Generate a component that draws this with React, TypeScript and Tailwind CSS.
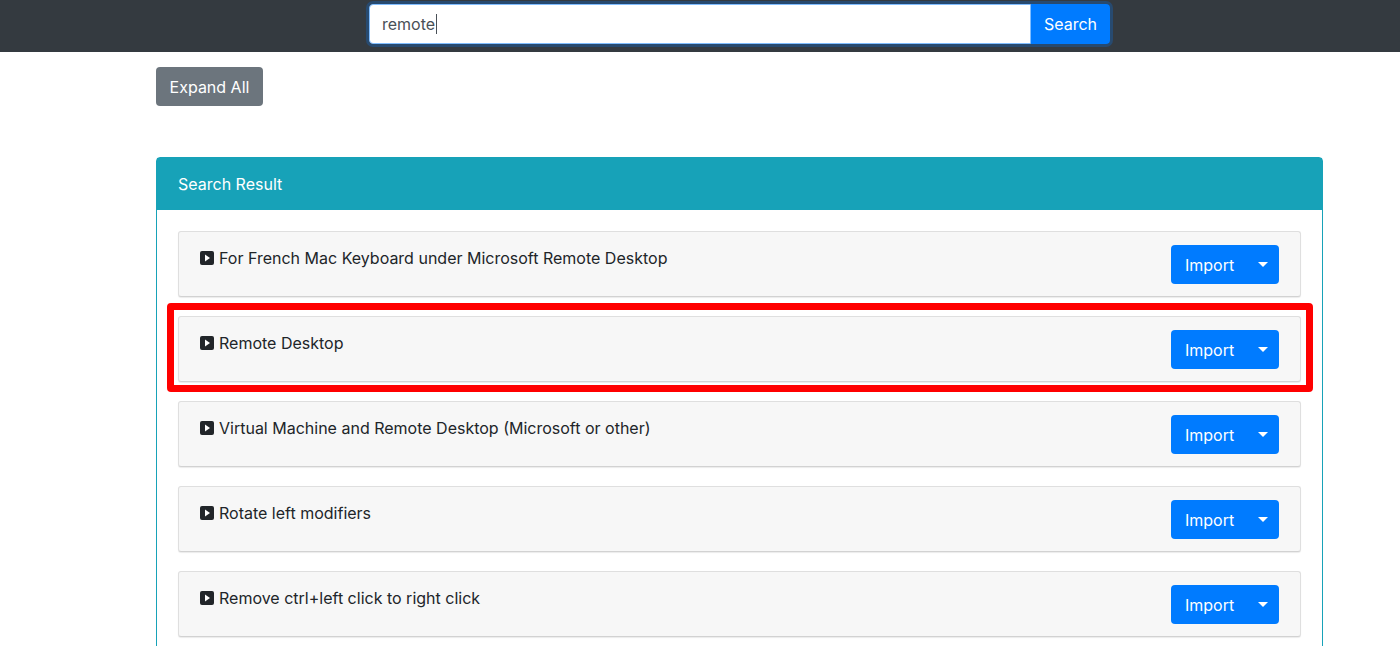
import React from 'react';

const items = [
  'For French Mac Keyboard under Microsoft Remote Desktop',
  'Remote Desktop',
  'Virtual Machine and Remote Desktop (Microsoft or other)',
  'Rotate left modifiers',
  'Remove ctrl+left click to right click',
];

const CaretSquare = () => (
  <svg className="h-[14px] w-[14px] flex-shrink-0" viewBox="0 0 14 14">
    <rect x="0" y="0" width="14" height="14" rx="2" fill="#212529" />
    <path d="M5 3.5 L10 7 L5 10.5 Z" fill="#fff" />
  </svg>
);

const ImportButton = () => (
  <div className="flex h-[39px] w-[108px] flex-shrink-0 rounded-[4px] bg-[#007bff] text-white">
    <button type="button" className="flex-1 pl-[14px] text-left text-[16px] leading-[24px]">
      Import
    </button>
    <button type="button" className="flex items-center pl-[6px] pr-[11px]">
      <span className="h-0 w-0 border-x-[5px] border-t-[5px] border-x-transparent border-t-white" />
    </button>
  </div>
);

const ResultItem: React.FC<{ title: string; highlighted?: boolean }> = ({ title, highlighted }) => (
  <div className="relative">
    {highlighted && (
      <div className="pointer-events-none absolute -left-[11px] -right-[12px] -top-[13px] -bottom-[10px] rounded-[4px] border-[7px] border-[#ff0000]" />
    )}
    <div className="flex h-[66px] items-start justify-between rounded-[3px] border border-[#dfdfdf] border-b-[#d2d2d2] bg-[#f7f7f7] pl-[21px] pr-[21px] pt-[13px] shadow-[0_1px_1px_rgba(0,0,0,0.08)]">
      <div className="flex items-center gap-[5px] pt-[1px] text-[16px] leading-[24px] text-[#212529]">
        <CaretSquare />
        <span>{title}</span>
      </div>
      <ImportButton />
    </div>
  </div>
);

export default function App() {
  return (
    <div className="min-h-screen bg-white font-['Inter','Liberation_Sans',Arial,sans-serif]">
      <div className="h-[52px] bg-[#343a40] pt-[4px]">
        <div className="ml-[156px] flex w-[1167px] justify-center">
          <div className="flex w-[741px] rounded-[4px] shadow-[0_0_0_3px_rgba(0,123,255,0.25)]">
            <div className="flex h-[40px] flex-1 items-center rounded-l-[4px] border border-[#80bdff] bg-white px-[12px] text-[16px] text-[#495057]">
              remote<span className="ml-[1px] h-[20px] w-[1px] bg-[#495057]" />
            </div>
            <button type="button" className="h-[40px] w-[79px] rounded-r-[4px] bg-[#007bff] text-[16px] text-white">
              Search
            </button>
          </div>
        </div>
      </div>

      <div className="ml-[156px] w-[1167px]">
        <button type="button" className="mt-[15px] h-[39px] w-[107px] rounded-[4px] bg-[#6c757d] text-[16px] text-white">
          Expand All
        </button>

        <div className="mt-[51px] rounded-t-[4px] border border-[#17a2b8]">
          <div className="flex h-[52px] items-center bg-[#17a2b8] px-[21px] text-[16px] text-white">
            Search Result
          </div>
          <div className="flex flex-col gap-[19px] px-[21px] pt-[21px] pb-[21px]">
            {items.map((t, i) => (
              <ResultItem key={t} title={t} highlighted={i === 1} />
            ))}
          </div>
        </div>
      </div>
    </div>
  );
}
